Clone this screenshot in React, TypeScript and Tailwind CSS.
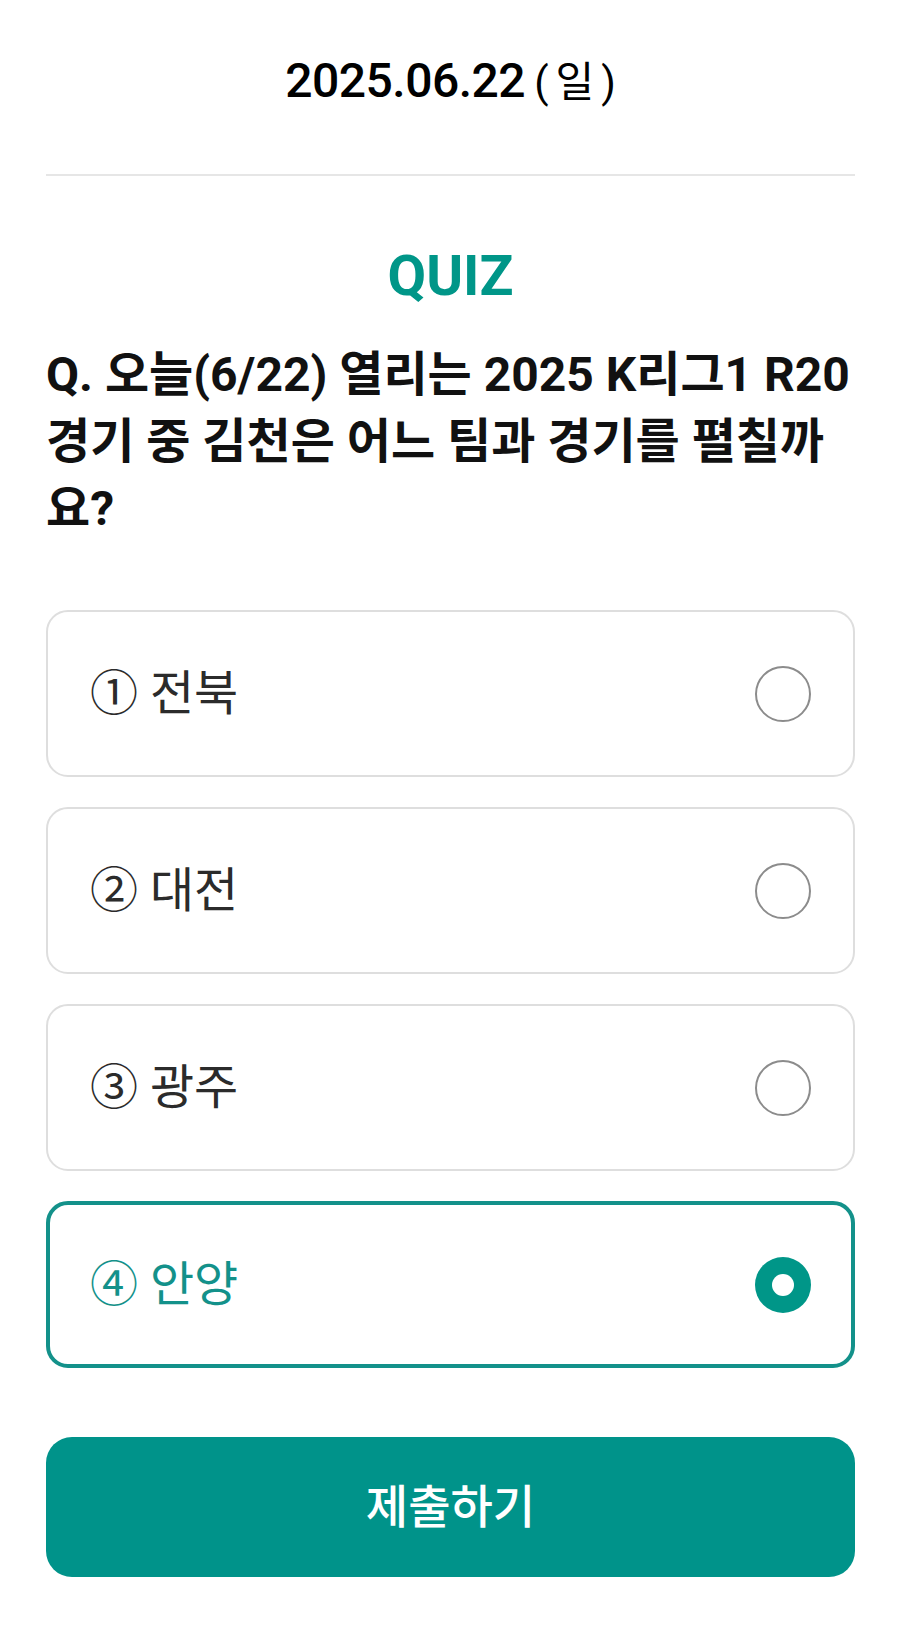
import React, { useState } from 'react';

const options = ['① 전북', '② 대전', '③ 광주', '④ 안양'];

const font = { fontFamily: 'Roboto, "Noto Sans CJK KR", sans-serif' };

const Radio = ({ checked }: { checked: boolean }) =>
  checked ? (
    <span className="flex h-[56px] w-[56px] shrink-0 items-center justify-center rounded-full bg-[#009688]">
      <span className="h-[22px] w-[22px] rounded-full bg-white" />
    </span>
  ) : (
    <span className="h-[56px] w-[56px] shrink-0 rounded-full border-2 border-[#8c8c8c] bg-white" />
  );

export default function App() {
  const [selected, setSelected] = useState(3);

  return (
    <div className="min-h-[1641px] w-[917px] bg-white text-black" style={font}>
      <div className="ml-[46px] w-[809px]">
        {/* Date */}
        <div className="flex items-baseline justify-center pt-[57px] leading-[48px]">
          <span className="text-[48px] font-medium tracking-[-0.5px]">2025.06.22</span>
          <span className="-mr-[7px] ml-[9px] text-[42px] font-normal leading-[48px] tracking-[7px]">(일)</span>
        </div>

        <div className="mt-[67px] h-[2px] bg-[#e6e6e6]" />

        {/* Quiz */}
        <h2 className="mt-[72px] text-center text-[56px] font-bold leading-[56px] text-[#009688]">QUIZ</h2>

        <p className="mt-[37px] text-[48px] font-bold leading-[67px] text-[#111]">
          Q. 오늘(6/22) 열리는 2025 K리그1 R20 경기 중 김천은 어느 팀과 경기를 펼칠까요?
        </p>

        <div className="mt-[68px] flex flex-col gap-[30px]">
          {options.map((label, i) => {
            const active = selected === i;
            return (
              <button
                key={label}
                type="button"
                onClick={() => setSelected(i)}
                className={`flex h-[167px] items-center justify-between rounded-[22px] bg-white text-left ${
                  active
                    ? 'border-4 border-[#13918a] pl-[40px] pr-[40px] text-[#13918a]'
                    : 'border-2 border-[#dedede] pl-[42px] pr-[42px] text-[#2b2b2b]'
                }`}
              >
                <span className="text-[48px] font-normal leading-none">{label}</span>
                <Radio checked={active} />
              </button>
            );
          })}
        </div>

        <button
          type="button"
          className="mt-[69px] flex h-[140px] w-full items-center justify-center rounded-[26px] bg-[#00938a] text-[46px] font-medium text-white"
        >
          제출하기
        </button>
      </div>
    </div>
  );
}
